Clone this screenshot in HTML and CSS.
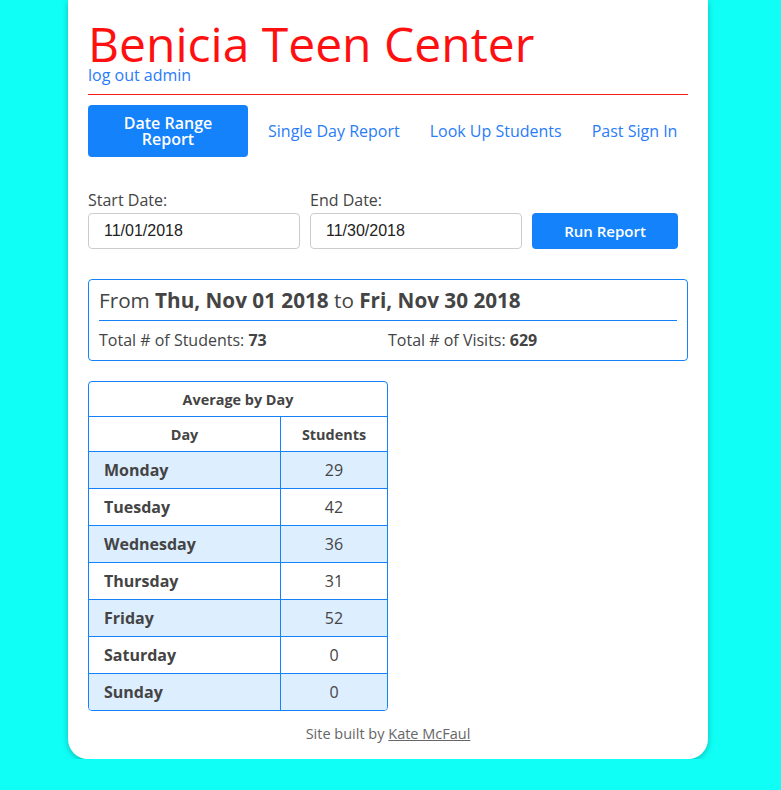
FILE: index.html
```html
<!DOCTYPE html>
<html>
<head>
<meta charset="utf-8">
<link rel="stylesheet" href="styles.css">
</head>
<body>
<div class="card">
  <header class="header">
    <h1 class="title">Benicia Teen Center</h1>
    <a class="logout" href="#">log out admin</a>
  </header>
  <nav class="nav">
    <a class="nav-btn" href="#">Date Range Report</a>
    <a class="nav-link" href="#">Single Day Report</a>
    <a class="nav-link" href="#">Look Up Students</a>
    <a class="nav-link" href="#">Past Sign In</a>
  </nav>
  <form class="range-form">
    <label class="field">
      <span class="label">Start Date:</span>
      <input class="date-input" type="text" value="11/01/2018">
    </label>
    <label class="field">
      <span class="label">End Date:</span>
      <input class="date-input" type="text" value="11/30/2018">
    </label>
    <button class="run-btn" type="button">Run Report</button>
  </form>
  <section class="summary">
    <h2 class="summary-title">From <b>Thu, Nov 01 2018</b> to <b>Fri, Nov 30 2018</b></h2>
    <div class="stats">
      <div class="stat">Total # of Students: <b>73</b></div>
      <div class="stat">Total # of Visits: <b>629</b></div>
    </div>
  </section>
  <table class="avg-table">
    <thead>
      <tr><th colspan="2" class="caption-cell">Average by Day</th></tr>
      <tr><th class="col-day">Day</th><th class="col-num">Students</th></tr>
    </thead>
    <tbody>
      <tr class="odd"><td class="day">Monday</td><td class="num">29</td></tr>
      <tr><td class="day">Tuesday</td><td class="num">42</td></tr>
      <tr class="odd"><td class="day">Wednesday</td><td class="num">36</td></tr>
      <tr><td class="day">Thursday</td><td class="num">31</td></tr>
      <tr class="odd"><td class="day">Friday</td><td class="num">52</td></tr>
      <tr><td class="day">Saturday</td><td class="num">0</td></tr>
      <tr class="odd last"><td class="day">Sunday</td><td class="num">0</td></tr>
    </tbody>
  </table>
  <footer class="footer">Site built by <a href="#">Kate McFaul</a></footer>
</div>
</body>
</html>
```
FILE: styles.css
```css
html, body {
  margin: 0;
  padding: 0;
  background: #0ffff6;
}
body {
  font-family: "Open Sans", sans-serif;
  color: #444;
}
.card {
  width: 600px;
  margin: 0 0 0 68px;
  padding: 0 20px 16px;
  background: #fff;
  border-radius: 0 0 20px 20px;
  box-shadow: 0 2px 6px rgba(0,0,0,0.25);
}
.header {
  border-bottom: 1px solid #ff1a1a;
  padding-bottom: 11px;
}
.title {
  margin: 0;
  padding-top: 20px;
  font-size: 48px;
  font-weight: 400;
  line-height: 47px;
  color: #ff1010;
}
.logout {
  display: block;
  font-size: 16px;
  line-height: 16px;
  color: #2a7cf7;
  text-decoration: none;
}
.nav {
  display: flex;
  align-items: center;
  margin-top: 10px;
}
.nav-btn {
  flex: 0 0 160px;
  width: 160px;
  height: 52px;
  box-sizing: border-box;
  display: flex;
  align-items: center;
  justify-content: center;
  text-align: center;
  padding: 0 30px;
  background: #1482fa;
  color: #fff;
  border-radius: 4px;
  font-size: 16px;
  line-height: 16px;
  font-weight: 600;
  text-decoration: none;
  margin-right: 5px;
}
.nav-link {
  flex: 0 0 auto;
  white-space: nowrap;
  padding: 0 15px;
  font-size: 16px;
  color: #2a7cf7;
  text-decoration: none;
}
.nav-link:last-child { padding-right: 0; }
.range-form {
  display: flex;
  align-items: flex-end;
  gap: 10px;
  margin-top: 33px;
}
.field {
  display: flex;
  flex-direction: column;
  width: 212px;
}
.label {
  font-size: 16px;
  line-height: 20px;
  margin-bottom: 3px;
}
.date-input {
  height: 36px;
  box-sizing: border-box;
  border: 1px solid #ccc;
  border-radius: 4px;
  padding: 0 15px;
  font-family: "Liberation Sans", Arial, sans-serif;
  font-size: 16px;
  color: #222;
}
.run-btn {
  width: 146px;
  height: 36px;
  border: none;
  border-radius: 4px;
  background: #1482fa;
  color: #fff;
  font-family: "Open Sans", sans-serif;
  font-weight: 600;
  font-size: 15px;
}
.summary {
  margin-top: 30px;
  border: 1px solid #1482fa;
  border-radius: 4px;
  padding: 6px 10px 9px;
}
.summary-title {
  margin: 0;
  font-size: 20.7px;
  font-weight: 400;
  line-height: 28px;
  padding-bottom: 6px;
  border-bottom: 1px solid #1482fa;
}
.summary-title b { font-weight: 700; }
.stats {
  display: grid;
  grid-template-columns: 1fr 1fr;
  margin-top: 8px;
  font-size: 16px;
  line-height: 22px;
}
.stat b { font-weight: 700; }
.avg-table {
  margin-top: 20px;
  width: 300px;
  border-collapse: separate;
  border-spacing: 0;
  border: 1px solid #1482fa;
  border-radius: 4px;
}
.avg-table th, .avg-table td {
  border-right: 1px solid #1482fa;
  border-bottom: 1px solid #1482fa;
}
.avg-table th:last-child, .avg-table td:last-child { border-right: none; }
.avg-table .caption-cell { border-right: none; }
.avg-table tr.last td { border-bottom: none; }
.avg-table th {
  font-size: 14.4px;
  font-weight: 700;
  height: 34px;
  padding: 0;
}
.col-day { width: 191px; }
.avg-table td {
  height: 36px;
  padding: 0;
  font-size: 16px;
}
.day {
  padding-left: 15px !important;
  font-weight: 700;
}
.num { text-align: center; }
.odd td { background: #ddeeff; }
.avg-table tr.last td:first-child { border-bottom-left-radius: 3px; }
.avg-table tr.last td:last-child { border-bottom-right-radius: 3px; }
.footer {
  text-align: center;
  margin-top: 13px;
  font-size: 14.5px;
  color: #666;
}
.footer a { color: #666; }
```
